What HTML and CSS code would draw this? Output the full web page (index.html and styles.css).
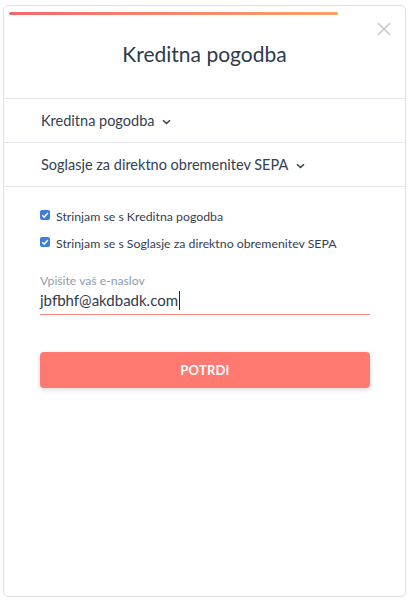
FILE: index.html
```html
<!DOCTYPE html>
<html lang="sl">
<head>
<meta charset="utf-8">
<title>Kreditna pogodba</title>
<link rel="stylesheet" href="styles.css">
</head>
<body>
<div class="card">
  <div class="progress"></div>
  <button class="close" aria-label="Zapri">
    <svg width="14" height="14" viewBox="0 0 14 14"><path d="M1 1L13 13M13 1L1 13" stroke="#c3cad2" stroke-width="1.6" fill="none"/></svg>
  </button>
  <h1 class="title">Kreditna pogodba</h1>
  <div class="row">
    <span>Kreditna pogodba</span>
    <svg class="chev" width="9" height="6" viewBox="0 0 9 6"><path d="M1 1.2L4.5 4.5L8 1.2" stroke="#34404f" stroke-width="1.5" fill="none"/></svg>
  </div>
  <div class="row">
    <span>Soglasje za direktno obremenitev SEPA</span>
    <svg class="chev" width="9" height="6" viewBox="0 0 9 6"><path d="M1 1.2L4.5 4.5L8 1.2" stroke="#34404f" stroke-width="1.5" fill="none"/></svg>
  </div>
  <div class="form">
    <label class="check">
      <span class="box"><svg width="10" height="10" viewBox="0 0 10 10"><path d="M2.2 5.2L4.2 7.1L7.9 2.9" stroke="#fff" stroke-width="1.5" fill="none"/></svg></span>
      <span>Strinjam se s Kreditna pogodba</span>
    </label>
    <label class="check">
      <span class="box"><svg width="10" height="10" viewBox="0 0 10 10"><path d="M2.2 5.2L4.2 7.1L7.9 2.9" stroke="#fff" stroke-width="1.5" fill="none"/></svg></span>
      <span>Strinjam se s Soglasje za direktno obremenitev SEPA</span>
    </label>
    <div class="field">
      <div class="label">Vpišite vaš e-naslov</div>
      <div class="input">jbfbhf@akdbadk.com<span class="caret"></span></div>
    </div>
    <button class="submit">POTRDI</button>
  </div>
</div>
</body>
</html>
```
FILE: styles.css
```css
* { box-sizing: border-box; }
html, body { margin: 0; padding: 0; background: #fff; }
body {
  font-family: "Source Sans Pro", Lato, "Noto Sans", sans-serif;
  color: #2f3b4c;
  padding: 5px 4px 5px 3px;
}
.card {
  position: relative;
  height: 592px;
  border: 1px solid #dde2e7;
  border-radius: 5px;
  background: #fff;
  padding-top: 6px;
}
.progress {
  height: 3px;
  margin: 0 67px 0 5px;
  border-radius: 2px;
  background: linear-gradient(90deg, #f4676c 0%, #f78a6d 55%, #fba06a 100%);
}
.close {
  position: absolute;
  top: 16px;
  right: 14px;
  border: 0;
  background: none;
  padding: 0;
  width: 14px;
  height: 14px;
  display: flex;
}
.title {
  margin: 0;
  height: 84px;
  display: flex;
  align-items: center;
  justify-content: center;
  font-size: 21px;
  font-weight: 400;
  color: #2d3a4b;
  border-bottom: 1px solid #e4e8ec;
  padding-bottom: 6px;
}
.row {
  height: 44px;
  display: flex;
  align-items: center;
  gap: 8px;
  padding-left: 37px;
  font-size: 14.5px;
  color: #34404f;
  border-bottom: 1px solid #e4e8ec;
}
.chev { margin-top: 2px; }
.form {
  padding: 21px 35px 0 36px;
}
.check {
  display: flex;
  align-items: center;
  gap: 6px;
  font-size: 12.3px;
  color: #34404f;
  height: 16px;
  margin-bottom: 11px;
}
.box {
  width: 10px;
  height: 10px;
  border-radius: 2px;
  background: #3b7ddd;
  display: flex;
  margin-top: -2px;
}
.field { margin-top: 22px; }
.label {
  font-size: 12.2px;
  color: #8d9cb0;
  line-height: 16px;
}
.input {
  font-size: 15px;
  color: #2f3b4c;
  line-height: 22px;
  padding-top: 0;
  height: 26px;
  border-bottom: 1px solid #f3877f;
  display: flex;
  align-items: flex-start;
}
.caret {
  display: inline-block;
  width: 1px;
  height: 19px;
  background: #1f2a38;
  margin-top: 2px;
  margin-left: 1px;
}
.submit {
  display: block;
  width: 100%;
  height: 36px;
  margin-top: 37px;
  border: 0;
  border-radius: 4px;
  background: #ff7970;
  color: #fff;
  font-family: inherit;
  font-size: 13px;
  font-weight: 700;
  letter-spacing: 0.2px;
  box-shadow: 0 2px 5px rgba(120, 120, 120, 0.25);
}
```
